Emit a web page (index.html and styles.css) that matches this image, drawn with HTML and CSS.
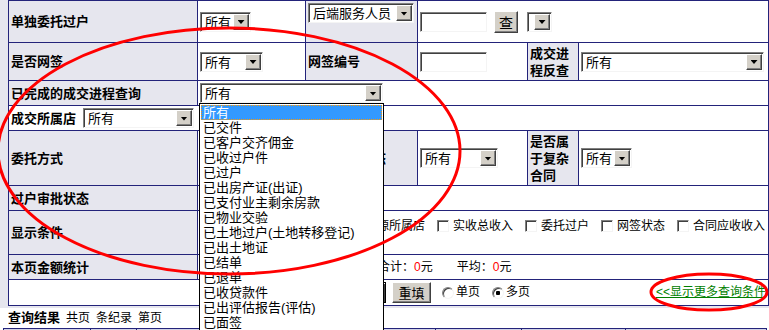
FILE: index.html
```html
<!DOCTYPE html>
<html lang="zh-CN">
<head>
<meta charset="UTF-8">
<title>成交查询</title>
<link rel="stylesheet" href="styles.css">
</head>
<body>
<div id="page">
  <div id="searchBox">
    <table class="search">
      <colgroup>
        <col class="c1"><col class="c2"><col class="c3"><col class="c4"><col class="c5"><col class="c6">
      </colgroup>
      <tr class="r1">
        <td class="lbl">单独委托过户</td>
        <td><span class="sel w51"><span class="sel-txt">所有</span><i class="sel-btn"></i></span></td>
        <td class="lbl top"><span class="sel w106"><span class="sel-txt">后端服务人员</span><i class="sel-btn"></i></span></td>
        <td colspan="3"><input type="text" class="txt"><button type="button" class="btn q">查</button><span class="sel w25"><span class="sel-txt"></span><i class="sel-btn"></i></span></td>
      </tr>
      <tr class="r2">
        <td class="lbl">是否网签</td>
        <td><span class="sel w63"><span class="sel-txt">所有</span><i class="sel-btn"></i></span></td>
        <td class="lbl">网签编号</td>
        <td><input type="text" class="txt"></td>
        <td class="lbl">成交进程反查</td>
        <td><span class="sel w183"><span class="sel-txt">所有</span><i class="sel-btn"></i></span></td>
      </tr>
      <tr class="r3">
        <td class="lbl">已完成的成交进程查询</td>
        <td colspan="5"><span class="sel w183"><span class="sel-txt">所有</span><i class="sel-btn"></i></span></td>
      </tr>
      <tr class="r4">
        <td colspan="6"><b class="inline-lbl">成交所属店</b><span class="sel w111"><span class="sel-txt">所有</span><i class="sel-btn"></i></span></td>
      </tr>
      <tr class="r5">
        <td class="lbl">委托方式</td>
        <td></td>
        <td class="lbl">委托审核状态</td>
        <td><span class="sel w78"><span class="sel-txt">所有</span><i class="sel-btn"></i></span></td>
        <td class="lbl">是否属于复杂合同</td>
        <td><span class="sel w51"><span class="sel-txt">所有</span><i class="sel-btn"></i></span></td>
      </tr>
      <tr class="r6">
        <td class="lbl">过户审批状态</td>
        <td colspan="5"></td>
      </tr>
      <tr class="r7">
        <td class="lbl">显示条件</td>
        <td colspan="5" class="opts-cell">
          <div class="opts">
            <label class="opt"><input type="checkbox" class="chk">房源所属店</label>
            <label class="opt"><input type="checkbox" class="chk">实收总收入</label>
            <label class="opt"><input type="checkbox" class="chk">委托过户</label>
            <label class="opt"><input type="checkbox" class="chk">网签状态</label>
            <label class="opt"><input type="checkbox" class="chk">合同应收收入</label>
          </div>
        </td>
      </tr>
      <tr class="r8">
        <td class="lbl">本页金额统计</td>
        <td colspan="5">
          <div class="sums">
            <span>合计：<em>0</em>元</span>
            <span>平均：<em>0</em>元</span>
          </div>
        </td>
      </tr>
      <tr class="r9">
        <td colspan="6">
          <div class="actions">
            <button type="button" class="btn def">查询</button>
            <button type="button" class="btn reset">重填</button>
            <label class="rad"><input type="radio" name="pg" class="radio">单页</label>
            <label class="rad"><input type="radio" name="pg" class="radio" checked>多页</label>
            <a href="#" class="more">&lt;&lt;显示更多查询条件</a>
          </div>
        </td>
      </tr>
    </table>
  </div>

  <div class="result">
    <b>查询结果</b><span>共页</span><span>条纪录</span><span>第页</span>
  </div>
  <table class="list">
    <tr>
      <th class="h1"></th><th class="h2"></th><th class="h3"></th><th class="h4"></th><th class="h5"></th><th class="h6"></th><th class="h7"></th><th></th>
    </tr>
  </table>

  <ul class="droplist">
    <li class="on">所有</li>
    <li>已交件</li>
    <li>已客户交齐佣金</li>
    <li>已收过户件</li>
    <li>已过户</li>
    <li>已出房产证(出证)</li>
    <li>已支付业主剩余房款</li>
    <li>已物业交验</li>
    <li>已土地过户(土地转移登记)</li>
    <li>已出土地证</li>
    <li>已结单</li>
    <li>已退单</li>
    <li>已收贷款件</li>
    <li>已出评估报告(评估)</li>
    <li>已面签</li>
  </ul>

  <svg class="marks" width="769" height="330" viewBox="0 0 769 330">
    <ellipse cx="229" cy="151" rx="231" ry="123"/>
    <ellipse cx="709" cy="292" rx="58" ry="18"/>
  </svg>
</div>
</body>
</html>
```
FILE: styles.css
```css
html, body {
  margin: 0;
  padding: 0;
  overflow: hidden;
  background: #fff;
}

body {
  font-family: "Liberation Sans", "Noto Sans CJK SC", sans-serif;
  font-size: 13px;
  color: #000;
}

#page {
  position: relative;
  width: 769px;
  height: 330px;
  overflow: hidden;
}

#searchBox {
  background: #e6e6ee;
  padding: 0 1px 2px 8px;
}

/* 查询条件表 */
.search {
  border-collapse: collapse;
  table-layout: fixed;
  width: 760px;
}

.search col.c1 { width: 189px; }
.search col.c2 { width: 108px; }
.search col.c3 { width: 112px; }
.search col.c4 { width: 110px; }
.search col.c5 { width: 51px; }
.search col.c6 { width: 190px; }

.search td {
  border: 1px solid #23237a;
  padding: 0 2px;
  background: #fff;
  vertical-align: middle;
  white-space: nowrap;
  line-height: 17px;
}

.search td.lbl {
  background: #e6e6ee;
  font-weight: bold;
  white-space: normal;
}

.search td.top {
  vertical-align: top;
  padding-top: 2px;
}

.search td.opts-cell {
  vertical-align: top;
  padding-top: 7px;
}

.r1 { height: 42px; }
.r2 { height: 38px; }
.r3 { height: 25px; }
.r4 { height: 25px; }
.r5 { height: 55px; }
.r6 { height: 25px; }
.r7 { height: 44px; }
.r8 { height: 25px; }
.r9 { height: 26px; }

.inline-lbl {
  margin-right: 7px;
  vertical-align: middle;
}

/* 下拉框 */
.sel {
  display: inline-flex;
  box-sizing: border-box;
  height: 20px;
  border: 1px solid;
  border-color: #808080 #f4f4f4 #f4f4f4 #808080;
  box-shadow: inset 1px 1px 0 #404040;
  background: #fff;
  vertical-align: middle;
  font-weight: normal;
  font-size: 13px;
  line-height: 18px;
}

.sel-txt {
  flex: 1;
  padding: 1px 0 0 4px;
  overflow: hidden;
  white-space: nowrap;
}

.sel-btn {
  width: 16px;
  box-sizing: border-box;
  margin: 1px 1px 1px 0;
  background: #d4d0c8;
  border: 1px solid;
  border-color: #fff #404040 #404040 #fff;
  box-shadow: inset -1px -1px 0 #808080;
  display: flex;
  align-items: center;
  justify-content: center;
}

.sel-btn::after {
  content: "";
  width: 7px;
  height: 4px;
  margin-top: 1px;
  background: #000;
  clip-path: polygon(0 0, 100% 0, 50% 100%);
}

.w25 { width: 25px; }
.w51 { width: 51px; }
.w63 { width: 63px; }
.w78 { width: 78px; }
.w106 { width: 106px; }
.w111 { width: 111px; }
.w183 { width: 183px; }

.txt {
  box-sizing: border-box;
  width: 67px;
  height: 20px;
  margin: 0;
  padding: 0;
  border: 1px solid;
  border-color: #808080 #f4f4f4 #f4f4f4 #808080;
  box-shadow: inset 1px 1px 0 #404040;
  background: #fff;
  vertical-align: middle;
}

.btn {
  box-sizing: border-box;
  margin: 0;
  padding: 0;
  font-family: inherit;
  font-size: 13px;
  color: #000;
  background: #d4d0c8;
  border: 1px solid;
  border-color: #fff #404040 #404040 #fff;
  box-shadow: inset -1px -1px 0 #808080;
  vertical-align: middle;
}

.btn.q {
  width: 24px;
  height: 22px;
  margin: 0 9px 0 7px;
  font-size: 14px;
}

.btn.def {
  width: 46px;
  height: 21px;
  border: 1px solid #000;
  box-shadow: inset 1px 1px 0 #fff, inset -1px -1px 0 #404040, inset -2px -2px 0 #808080;
}

.btn.reset {
  width: 39px;
  height: 21px;
  margin-left: 6px;
}

/* 显示条件 */
.opts {
  display: flex;
  gap: 12px;
  padding-left: 149px;
  font-size: 12px;
  line-height: 16px;
}

.opt {
  display: flex;
  align-items: center;
  gap: 4px;
}

.chk, .radio {
  appearance: none;
  -webkit-appearance: none;
  box-sizing: border-box;
  margin: 0;
  width: 12px;
  height: 12px;
  border: 1px solid;
  border-color: #808080 #f4f4f4 #f4f4f4 #808080;
  box-shadow: inset 1px 1px 0 #404040;
  background: #fff;
}

.radio {
  border-radius: 50%;
}

.radio:checked {
  background: radial-gradient(circle, #000 0 2px, #fff 2.5px);
}

.sums {
  display: flex;
  gap: 24px;
  padding-left: 178px;
  font-size: 12px;
}

.sums em {
  font-style: normal;
  color: #f00;
}

.actions {
  display: flex;
  align-items: center;
  padding-left: 329px;
  font-size: 12px;
}

.rad {
  display: flex;
  align-items: center;
  gap: 2px;
  margin-left: 11px;
}

.rad + .rad {
  margin-left: 12px;
}

.more {
  margin-left: auto;
  color: #008000;
  text-decoration: underline;
}

/* 查询结果 */
.result {
  height: 20px;
  line-height: 20px;
  padding-left: 8px;
  font-size: 12px;
}

.result b {
  font-size: 13px;
}

.result span {
  margin-left: 6px;
}

.list {
  border-collapse: collapse;
  width: 764px;
  margin-left: 3px;
  table-layout: fixed;
}

.list th {
  border: 1px solid #23237a;
  background: #d2d2e6;
  height: 22px;
}

.list .h1 { width: 84px; }
.list .h2 { width: 43px; }
.list .h3 { width: 63px; }
.list .h4 { width: 107px; }
.list .h5 { width: 120px; }
.list .h6 { width: 83px; }
.list .h7 { width: 101px; }

/* 展开的下拉列表 */
.droplist {
  position: absolute;
  left: 199px;
  top: 103px;
  width: 185px;
  box-sizing: border-box;
  margin: 0;
  padding: 1px 1px 0;
  list-style: none;
  background: #fff;
  border: 1px solid #000;
  font-size: 13px;
  line-height: 15px;
}

.droplist li {
  padding-left: 2px;
  white-space: nowrap;
}

.droplist li.on {
  background: #3399ff;
  color: #fff;
  outline: 1px dotted #f90;
  outline-offset: -1px;
}

/* 红圈标注 */
.marks {
  position: absolute;
  left: 0;
  top: 0;
  pointer-events: none;
}

.marks ellipse {
  fill: none;
  stroke: #f00;
  stroke-width: 3;
}
```
